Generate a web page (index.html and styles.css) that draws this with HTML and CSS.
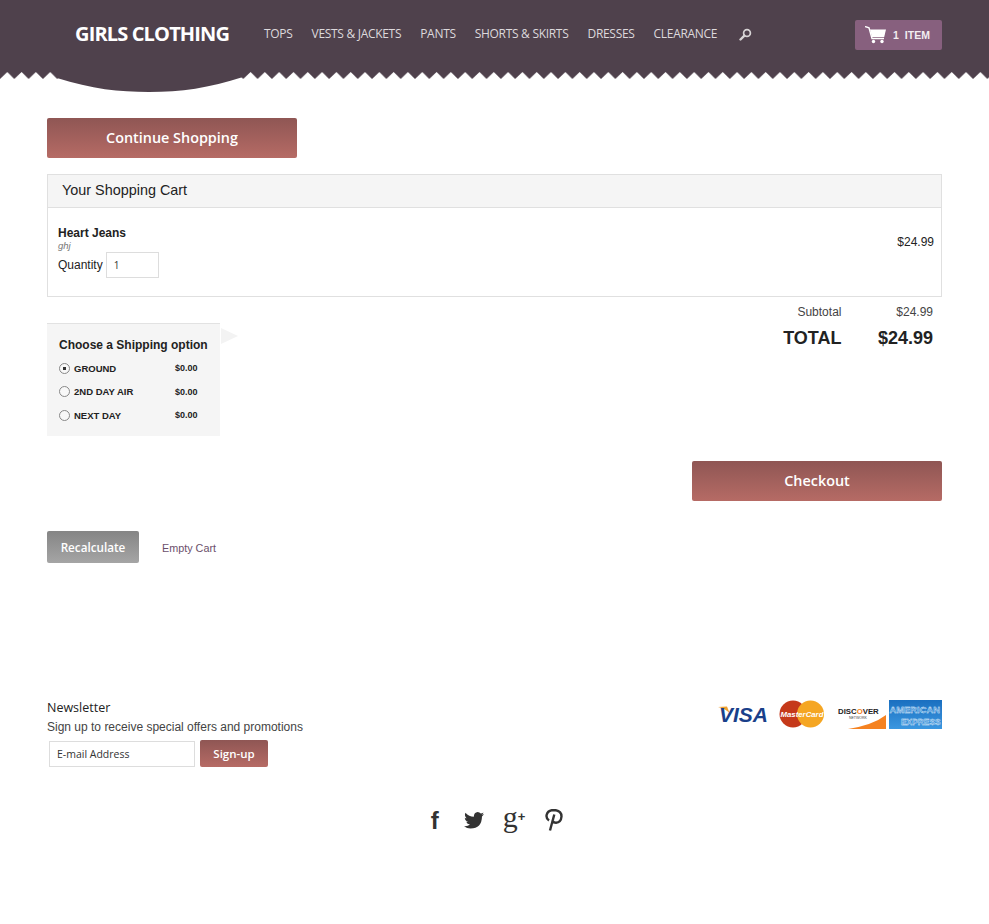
FILE: index.html
```html
<!DOCTYPE html>
<html lang="en">

<head>
    <title>Girls Clothing - Cart</title>
    <!--Stylesheet-->
    <link rel="stylesheet" href="styles.css">
</head>

<body>
    <header class="header">
        <div class="header-bar">
            <a class="logo">GIRLS CLOTHING</a>
            <nav class="nav">
                <a>TOPS</a>
                <a>VESTS &amp; JACKETS</a>
                <a>PANTS</a>
                <a>SHORTS &amp; SKIRTS</a>
                <a>DRESSES</a>
                <a>CLEARANCE</a>
                <svg class="search-icon" width="13" height="13" viewBox="0 0 13 13">
                    <circle cx="8" cy="5" r="3.4" fill="none" stroke="#d8d4d6" stroke-width="1.7" />
                    <path d="M5.4 7.6 L1.5 11.5" stroke="#d8d4d6" stroke-width="2.4" stroke-linecap="round" />
                </svg>
            </nav>
            <a class="cart-btn">
                <svg class="cart-icon" width="22" height="18" viewBox="0 0 22 18">
                    <path d="M0 0.5 L4 1.8 L7 12.5 L19 12.5" fill="none" stroke="#fff" stroke-width="1.4" />
                    <path d="M5 3.5 L21 3.5 L19.2 11 L7 11 Z" fill="#fff" />
                    <circle cx="8.5" cy="15.5" r="1.7" fill="#fff" />
                    <circle cx="17" cy="15.5" r="1.7" fill="#fff" />
                </svg>
                <span>1</span>
                <span>ITEM</span>
            </a>
        </div>
        <svg class="zigzag" width="989" height="7">
            <defs>
                <pattern id="teeth" width="14.31" height="7" patternUnits="userSpaceOnUse">
                    <polygon points="0,7 7.3,0 14.31,7" fill="#fff" />
                </pattern>
            </defs>
            <rect width="989" height="7" fill="url(#teeth)" />
        </svg>
        <svg class="bump" width="186" height="21" viewBox="0 0 186 21">
            <path d="M0 6 C35 17 62 20 92 20 C124 20 152 16 186 5 L186 0 L0 0 Z" fill="#4f414c" />
        </svg>
    </header>

    <main class="page">
        <a class="btn btn-wide">Continue Shopping</a>

        <section class="cart">
            <h2 class="cart-title">Your Shopping Cart</h2>
            <div class="cart-item">
                <div>
                    <p class="item-name">Heart Jeans</p>
                    <p class="item-note">ghj</p>
                    <label class="item-qty">Quantity <input class="qty-input" type="text" value="1"></label>
                </div>
                <p class="item-price">$24.99</p>
            </div>
        </section>

        <div class="summary">
            <div class="shipping">
                <h3 class="shipping-title">Choose a Shipping option</h3>
                <div class="ship-row">
                    <span class="radio radio-on"></span>
                    <span class="ship-name">GROUND</span>
                    <span>$0.00</span>
                </div>
                <div class="ship-row">
                    <span class="radio"></span>
                    <span class="ship-name">2ND DAY AIR</span>
                    <span>$0.00</span>
                </div>
                <div class="ship-row">
                    <span class="radio"></span>
                    <span class="ship-name">NEXT DAY</span>
                    <span>$0.00</span>
                </div>
                <span class="shipping-arrow"></span>
            </div>
            <div class="totals">
                <div class="total-row">
                    <span class="total-label">Subtotal</span>
                    <span class="total-value">$24.99</span>
                </div>
                <div class="total-row total-big">
                    <span class="total-label">TOTAL</span>
                    <span class="total-value">$24.99</span>
                </div>
            </div>
        </div>

        <div class="checkout-row">
            <a class="btn btn-wide">Checkout</a>
        </div>

        <div class="cart-actions">
            <a class="btn btn-grey">Recalculate</a>
            <a class="empty-link">Empty Cart</a>
        </div>

        <footer class="footer">
            <div class="footer-top">
                <div>
                    <h4 class="news-title">Newsletter</h4>
                    <p class="news-text">Sign up to receive special offers and promotions</p>
                    <form class="news-form">
                        <input class="news-input" type="text" value="E-mail Address">
                        <a class="btn btn-small">Sign-up</a>
                    </form>
                </div>
                <div class="pay-cards">
                    <svg class="card-visa" width="52" height="29" viewBox="0 0 52 29">
                        <path d="M0 7 L9 6.500 L12 14 Q8 8.500 0 7 Z" fill="#f0a030" />
                        <text x="1" y="21.500" class="visa-text">VISA</text>
                    </svg>
                    <svg class="card-mc" width="46" height="29" viewBox="0 0 46 29">
                        <circle cx="14" cy="14" r="13.500" fill="#c5391a" />
                        <circle cx="31.500" cy="14" r="13.500" fill="#f5a623" />
                        <text x="1.500" y="17" class="mc-text">MasterCard</text>
                    </svg>
                    <svg class="card-discover" width="50" height="29" viewBox="0 0 50 29">
                        <path d="M11 29 Q36 25 49 15 L49 29 Z" fill="#f58220" />
                        <text x="1" y="14" class="disc-text">DISC<tspan fill="#f58220">O</tspan>VER</text>
                        <text x="12" y="19" class="disc-small">NETWORK</text>
                    </svg>
                    <svg class="card-amex" width="53" height="29" viewBox="0 0 53 29">
                        <defs>
                            <linearGradient id="amex" x1="0" y1="0" x2="0" y2="1">
                                <stop offset="0" stop-color="#1a6fc0" />
                                <stop offset="1" stop-color="#3b97e0" />
                            </linearGradient>
                        </defs>
                        <rect width="53" height="29" fill="url(#amex)" />
                        <text x="0.500" y="13" class="amex-text">AMERICAN</text>
                        <text x="12" y="25" class="amex-text amex-second">EXPRESS</text>
                    </svg>
                </div>
            </div>
            <div class="social">
                <span class="social-f">f</span>
                <svg class="social-bird" width="20" height="17" viewBox="0 0 20 17">
                    <path d="M20 2 Q18.800 2.700 17.600 2.800 Q19 2 19.500 0.400 Q18.200 1.200 16.800 1.500 Q15.500 0 13.700 0 Q10 0.300 9.800 4.800 Q5 4.600 1.400 0.700 Q0 3.600 2.600 6.200 Q1.500 6.200 0.800 5.700 Q0.900 8.700 4 9.800 Q3 10 2.200 9.800 Q3.100 12.300 6 12.500 Q3.500 14.600 0 14.200 Q3 16.500 6.500 16.500 Q17.800 16.200 18 4.400 Q19.200 3.400 20 2 Z" fill="#333" />
                </svg>
                <span class="social-g">g<small>+</small></span>
                <svg width="18" height="22" viewBox="0 0 18 22">
                    <path d="M4 11.500 Q1 9.500 1.600 6 Q2.800 1 9 1 Q16.500 1.400 16.500 7.500 Q16 13.500 11 13.800 Q8.500 13.800 7.800 12" fill="none" stroke="#333" stroke-width="2.400" />
                    <path d="M9.300 5.500 L5 21.500" fill="none" stroke="#333" stroke-width="2.400" />
                </svg>
            </div>
        </footer>
    </main>
</body>

</html>
```

FILE: styles.css
```css
*,
*:before,
*:after {
    padding: 0;
    margin: 0;
    box-sizing: border-box;
}

body {
    min-height: 924px;
    background: #fff;
    font-family: "Liberation Sans", Arial, sans-serif;
    color: #222;
}

.header {
    position: relative;
    height: 79px;
    background: #4f414c;
}

.header-bar {
    display: flex;
    align-items: center;
    height: 50px;
    padding: 20px 47px 0 75px;
}

.logo {
    width: 189px;
    margin-top: -3px;
    font-family: "Open Sans", sans-serif;
    font-size: 20px;
    font-weight: 700;
    letter-spacing: -0.85px;
    color: #fff;
}

.nav {
    display: flex;
    align-items: center;
    gap: 19px;
    margin-top: -3px;
    font-family: "Open Sans", sans-serif;
    font-size: 12px;
    letter-spacing: -0.3px;
    color: #ddd9dc;
}

.search-icon {
    margin-left: 3px;
    margin-top: 2px;
}

.cart-btn {
    display: flex;
    align-items: center;
    width: 87px;
    height: 30px;
    margin-left: auto;
    padding-left: 10px;
    background: #87607e;
    border-radius: 2px;
    font-size: 10.500px;
    font-weight: 700;
    color: #f2eef1;
}

.cart-icon {
    margin-right: 6px;
}

.cart-btn span:last-child {
    margin-left: 6px;
}

.zigzag {
    position: absolute;
    left: 0;
    bottom: 0;
    display: block;
}

.bump {
    position: absolute;
    left: 57px;
    top: 72px;
}

.page {
    padding: 39px 47px 0;
}

.btn {
    display: block;
    text-align: center;
    color: #fff;
    font-family: "Open Sans", sans-serif;
    font-weight: 600;
    background: linear-gradient(#8f5654, #b66b65);
    border-radius: 2px;
}

.btn-wide {
    width: 250px;
    height: 40px;
    line-height: 39px;
    font-size: 14.400px;
}

.btn-grey {
    width: 92px;
    height: 32px;
    line-height: 33px;
    font-size: 11.700px;
    background: linear-gradient(#858585, #a5a5a5);
}

.btn-small {
    width: 68px;
    height: 27px;
    line-height: 27px;
    font-size: 11.500px;
}

.cart {
    margin-top: 16px;
    border: 1px solid #e0e0e0;
    height: 123px;
}

.cart-title {
    height: 33px;
    padding-left: 14px;
    line-height: 30px;
    font-size: 14.400px;
    font-weight: 400;
    background: #f5f5f5;
    border-bottom: 1px solid #e0e0e0;
}

.cart-item {
    display: flex;
    justify-content: space-between;
    align-items: center;
    padding: 18px 7px 0 10px;
}

.item-name {
    font-size: 12px;
    font-weight: 700;
    line-height: 14px;
}

.item-note {
    font-size: 9.500px;
    font-style: italic;
    line-height: 11px;
    color: #777;
}

.item-qty {
    display: flex;
    align-items: center;
    gap: 3px;
    margin-top: 1px;
    font-size: 12px;
}

.qty-input {
    width: 53px;
    height: 26px;
    padding-left: 7px;
    border: 1px solid #ddd;
    font-family: "Open Sans", sans-serif;
    font-size: 10px;
    color: #333;
}

.item-price {
    font-size: 12px;
    margin-top: -20px;
}

.summary {
    display: flex;
    justify-content: space-between;
    align-items: flex-start;
    margin-top: 0;
}

.shipping {
    position: relative;
    width: 173px;
    height: 113px;
    margin-top: 26px;
    padding: 14px 12px 0;
    background: #f5f5f5;
    border-top: 1px solid #e2e2e2;
    font-size: 9.500px;
    font-weight: 700;
}

.shipping-title {
    font-size: 12px;
    line-height: 14px;
    margin-bottom: 5px;
}

.ship-row {
    display: flex;
    align-items: center;
    height: 24.500px;
    margin-top: -1px;
}

.ship-row span:last-child {
    font-size: 9px;
}

.ship-name {
    width: 101px;
}

.radio {
    width: 11px;
    height: 11px;
    margin-right: 4px;
    background: #f8f8f8;
    border: 1px solid #888;
    border-radius: 50%;
}

.radio-on {
    background: radial-gradient(circle, #333 1.500px, #f8f8f8 2px);
}

.shipping-arrow {
    position: absolute;
    left: 174px;
    top: 4px;
    border-left: 17px solid #f3f3f3;
    border-top: 8px solid transparent;
    border-bottom: 8px solid transparent;
}

.totals {
    width: 200px;
    padding: 8px 9px 0 0;
}

.total-row {
    display: flex;
    justify-content: flex-end;
    font-size: 12px;
    line-height: 14px;
}

.total-label {
    width: 100px;
    text-align: right;
    color: #444;
}

.total-value {
    width: 92px;
    text-align: right;
    color: #444;
}

.total-big {
    margin-top: 8px;
    font-size: 18px;
    line-height: 22px;
    font-weight: 700;
}

.total-big span {
    color: #222;
}

.checkout-row {
    display: flex;
    justify-content: flex-end;
    margin-top: 25px;
}

.cart-actions {
    display: flex;
    align-items: center;
    gap: 23px;
    margin-top: 30px;
}

.empty-link {
    font-size: 10.800px;
    color: #6b4f6b;
    margin-top: 2px;
}

.footer {
    margin-top: 136px;
}

.footer-top {
    display: flex;
    justify-content: space-between;
    align-items: flex-start;
}

.news-title {
    font-family: "Open Sans", sans-serif;
    font-size: 12.500px;
    font-weight: 400;
    line-height: 17px;
}

.news-text {
    margin-top: 3px;
    font-size: 12px;
    line-height: 17px;
    color: #444;
}

.news-form {
    display: flex;
    align-items: flex-end;
    gap: 5px;
    margin: 4px 0 0 2px;
}

.news-input {
    width: 146px;
    height: 26px;
    padding-left: 7px;
    border: 1px solid #ddd;
    font-family: "Open Sans", sans-serif;
    font-size: 10.500px;
    color: #333;
}

.pay-cards {
    display: flex;
    align-items: flex-start;
    margin-left: auto;
    margin-top: 1px;
}

.pay-cards svg {
    display: block;
}

.card-mc {
    margin-left: 9px;
}

.card-discover {
    margin-left: 12px;
}

.card-amex {
    margin-left: 2px;
}

.visa-text {
    font-family: "Liberation Sans", sans-serif;
    font-size: 21px;
    font-weight: 700;
    font-style: italic;
    fill: #1a3f8a;
}

.mc-text {
    font-family: "Liberation Sans", sans-serif;
    font-size: 7.800px;
    font-weight: 700;
    font-style: italic;
    fill: #fff;
}

.disc-text {
    font-family: "Liberation Sans", sans-serif;
    font-size: 7.800px;
    font-weight: 700;
    fill: #222;
}

.disc-small {
    font-family: "Liberation Sans", sans-serif;
    font-size: 3.500px;
    fill: #444;
}

.amex-text {
    font-family: "Liberation Sans", sans-serif;
    font-size: 9.400px;
    font-weight: 700;
    fill: #3b8fd8;
    stroke: #eaf5fd;
    stroke-width: 0.350px;
}

.amex-second {
    font-size: 8.400px;
}

.social {
    display: flex;
    justify-content: center;
    align-items: center;
    gap: 20px;
    margin-top: 41px;
    padding-left: 5px;
    height: 24px;
    color: #333;
}

.social-f {
    font-family: "Liberation Sans", sans-serif;
    font-size: 24px;
    font-weight: 700;
    line-height: 24px;
    padding-top: 2px;
}

.social-bird {
    margin-left: 5px;
}

.social-g {
    font-family: "Liberation Serif", serif;
    font-size: 30px;
    line-height: 22px;
    margin-left: -1px;
    margin-top: -6px;
}

.social-g small {
    font-family: "Liberation Sans", sans-serif;
    font-size: 13px;
    font-weight: 700;
    vertical-align: 6px;
}
```
